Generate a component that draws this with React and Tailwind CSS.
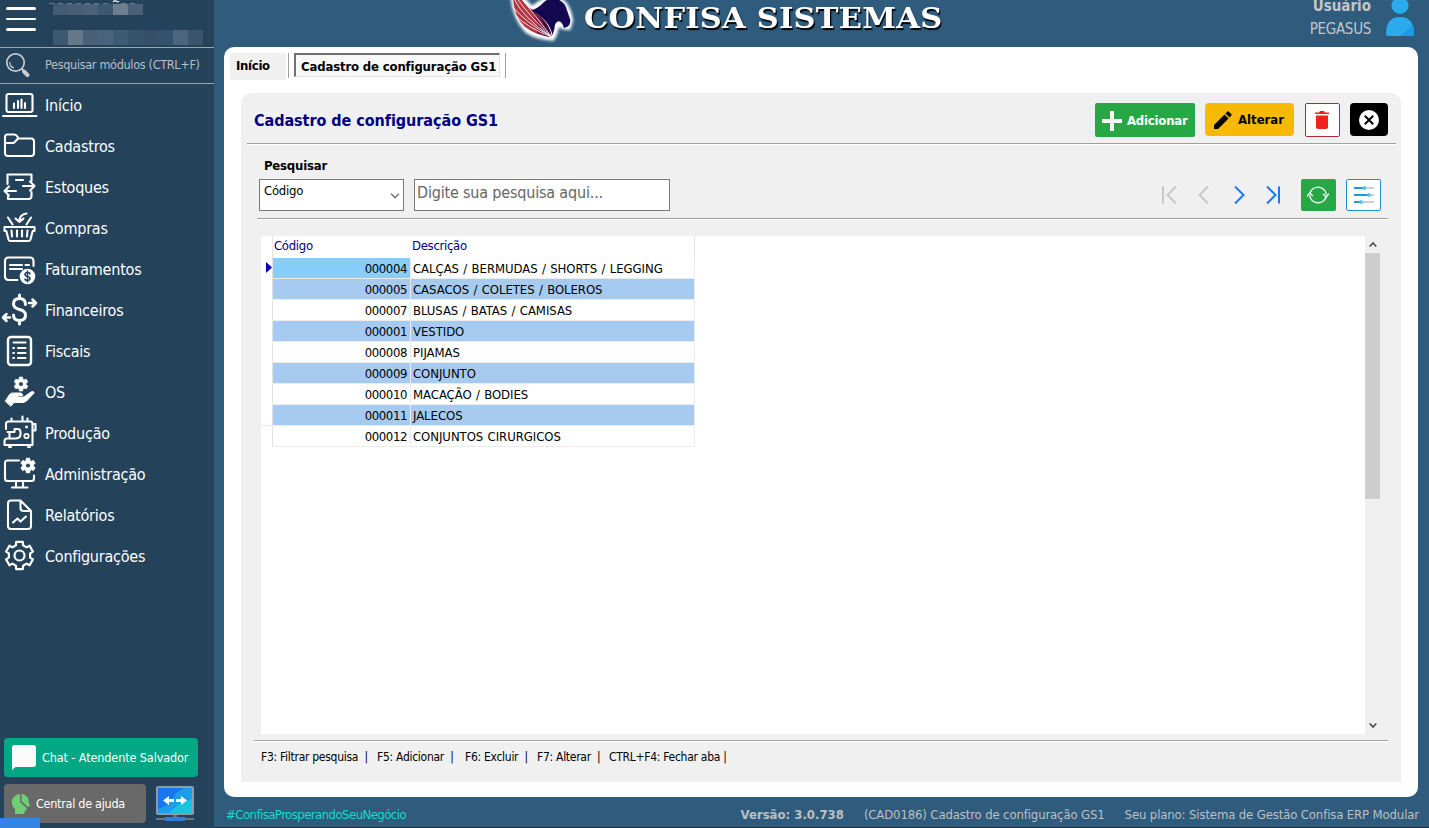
import React from "react";

function gearPath(cx, cy, outer, inner, top = 13, base = 21) {
  const pts = [];
  for (let i = 0; i < 6; i++) {
    const a = -90 + i * 60;
    [[-base, inner], [-top, outer], [top, outer], [base, inner]].forEach(([d, r]) => {
      const t = ((a + d) * Math.PI) / 180;
      pts.push(`${(cx + r * Math.cos(t)).toFixed(2)} ${(cy + r * Math.sin(t)).toFixed(2)}`);
    });
  }
  return `M${pts.join("L")}Z`;
}

const menu = [
  {
    label: "Início",
    icon: (
      <>
        <rect x="6.5" y="10" width="26" height="18" rx="2" />
        <path d="M3 32H36.5M14 19.500V24M18 17V24M21.500 15.500V24M25 19V24" />
      </>
    ),
  },
  {
    label: "Cadastros",
    icon: (
      <path d="M5 28V12Q5 9.500 7.500 9.500H14Q16 9.500 17 11L18.500 13.500H31Q34 13.500 34 16.500V28Q34 31 31 31H8Q5 31 5 28ZM5 18H12.500Q14 18 15 16.800L18 13.500" />
    ),
  },
  {
    label: "Estoques",
    icon: (
      <path d="M7.500 18V8.500H31.500V15M16 14H23M23 20H34.500M30 15.500L34.500 20L30 24.500M31.500 26V30Q31.500 33 28.500 33H8V29.500M16 25H4.500M9 20.500L4.500 25L9 29.500" />
    ),
  },
  {
    label: "Compras",
    icon: (
      <>
        <path d="M4.500 20H34.500V24H32.700L30.500 32.500Q30 34 28.500 34H10.500Q9 34 8.500 32.500L6.300 24H4.500ZM11.500 23.500L12 29.500M17 23.500V29.500M22 23.500V29.500M27.500 23.500L27 29.500M8 10.500L12.500 17.500M31 10.500L26.500 17.500" />
        <path d="M26.500 6.500Q19.500 7.500 19.500 14M15.500 11.500L19.500 15L23.500 11.500" />
      </>
    ),
  },
  {
    label: "Faturamentos",
    icon: (
      <>
        <path d="M17.500 32H8.500Q5 32 5 28.500V13Q5 9.500 8.500 9.500H30Q33.500 9.500 33.500 13V18M10 17H22M25.500 17H29M10 21H22" />
        <circle cx="27.500" cy="28.500" r="7.800" fill="white" stroke="none" />
        <path stroke="#24425a" strokeWidth="1.5" d="M30 26Q30 24.500 27.500 24.500T25 26.500Q25 28 27.500 28.500T30 30.500Q30 32.500 27.500 32.500T25 31M27.500 23V34" />
      </>
    ),
  },
  {
    label: "Financeiros",
    icon: (
      <>
        <path strokeWidth="3" d="M25.500 15.500Q25.500 9.500 19.500 9.500T13.500 15Q13.500 19 19.500 20.500T25.500 26Q25.500 31.500 19.500 31.500T13.500 26M19.500 6V9M19.500 32V35" />
        <path strokeWidth="2.500" d="M29 14H35.500M32.500 10.500L36 14L32.500 17.500M10 28.500H3.500M6.500 25L3 28.500L6.500 32" />
      </>
    ),
  },
  {
    label: "Fiscais",
    icon: (
      <>
        <rect x="8" y="7" width="23" height="28" rx="3" strokeWidth="2.400" />
        <path d="M13.500 12.500H25.500M18 18H25.500M18 23H25.500M18 28H25.500M13.200 18H14M13.200 23H14M13.200 28H14" />
      </>
    ),
  },
  {
    label: "OS",
    icon: (
      <>
        <path fill="white" fillRule="evenodd" strokeWidth="1" d={gearPath(21, 13, 7, 5) + "M21 10.500a2.500 2.500 0 1 0 .01 0Z"} />
        <path fill="white" strokeWidth="1" d="M5.500 30L9.500 23.500Q11.500 21.500 14 22H20.500Q23 22.500 22.500 24.500H17.500V26H24L31 21Q33.500 19.800 34.300 21.800L26.500 30Q24.500 31.500 22 31.500H14L11 35Z" />
      </>
    ),
  },
  {
    label: "Produção",
    icon: (
      <>
        <path d="M7 33H4.500V29.500Q4.500 26.500 7 26.500H16Q20.500 26 20.500 22.500V20Q20.500 17 17.500 17H14.500V20H7.500M6 17V12Q6 9.500 8.500 9.500H30Q32.500 9.500 32.500 12V33H7M11.500 9V6.500M22.500 9V4.500M27.500 9V6.500M9.500 20.500V26M32.500 12H35.500V18.500H32.500M9 35H11M28 35H30" />
        <circle cx="26.500" cy="15" r="1" fill="white" strokeWidth="1" />
        <circle cx="26.500" cy="24" r="2.200" strokeWidth="1.800" />
      </>
    ),
  },
  {
    label: "Administração",
    icon: (
      <>
        <path d="M19 7.500H7.500Q5 7.500 5 10V25.500Q5 28 7.500 28H31.500Q34 28 34 25.500V22.500M16 28V34M23 28V34M12 34.500H27.500" />
        <path fill="white" fillRule="evenodd" strokeWidth="1" d={gearPath(28, 12.500, 7.400, 5.300) + "M28 10a2.500 2.500 0 1 0 .01 0Z"} />
      </>
    ),
  },
  {
    label: "Relatórios",
    icon: (
      <path d="M20.500 6.500H11Q8 6.500 8 9.500V32Q8 35 11 35H28Q31 35 31 32V17L20.500 6.500ZM20.500 7V14Q20.500 17 23.500 17H31M13 28.500L17.500 24.500L20.500 27.500L26 22.500" />
    ),
  },
  {
    label: "Configurações",
    icon: (
      <>
        <path strokeWidth="2.200" d={gearPath(19.500, 20.500, 14, 10.800, 14, 19)} />
        <circle cx="19.500" cy="20.500" r="5" strokeWidth="2.200" />
      </>
    ),
  },
];

const rows = [
  ["000004", "CALÇAS / BERMUDAS / SHORTS / LEGGING"],
  ["000005", "CASACOS / COLETES / BOLEROS"],
  ["000007", "BLUSAS / BATAS / CAMISAS"],
  ["000001", "VESTIDO"],
  ["000008", "PIJAMAS"],
  ["000009", "CONJUNTO"],
  ["000010", "MACAÇÃO / BODIES"],
  ["000011", "JALECOS"],
  ["000012", "CONJUNTOS CIRURGICOS"],
];

const mosaicTop = ["bg-[#435b73]", "bg-[#465e76]", "bg-[#4b6278]", "bg-[#3e5870]", "bg-[#6b7f8f]", "bg-[#4a6177]"];
const mosaicBottom = [
  "bg-[#3f5871]", "bg-[#647789]", "bg-[#4a6076]", "bg-[#48637c]", "bg-[#3f5a73]",
  "bg-[#38546a]", "bg-[#364f69]", "bg-[#36516b]", "bg-[#4a657c]", "bg-[#3b546b]",
];

function Sidebar() {
  return (
    <aside className="flex w-[214px] shrink-0 flex-col bg-[#24425a] text-white">
      <div className="flex h-12 shrink-0 border-b border-[#9aa5ae]">
        <div className="flex w-[53px] flex-col gap-2 pt-[7px] pl-1.5">
          <span className="h-[2.5px] w-[30px] rounded bg-white" />
          <span className="h-[2.5px] w-[30px] rounded bg-white" />
          <span className="h-[2.5px] w-[30px] rounded bg-white" />
        </div>
        <div className="flex flex-col justify-between pb-0.5">
          <div className="flex flex-col">
            <svg className="-ml-1 h-1 w-[92px]" viewBox="0 0 92 4" fill="none" stroke="#9aa9b5" strokeWidth="0.8">
              <path strokeDasharray="5 4" d="M0 3.800H60M72 3.800H88" />
              <path stroke="#e2e8ec" strokeWidth="1.300" d="M64 2Q66 0 67.500 1.300T70 1" />
            </svg>
            <div className="flex h-[11px]">
              {mosaicTop.map((c) => <span key={c} className={`w-[15px] ${c}`} />)}
            </div>
          </div>
          <div className="flex h-[15px]">
            {mosaicBottom.map((c) => <span key={c} className={`w-[15px] ${c}`} />)}
          </div>
        </div>
      </div>
      <div className="flex h-9 shrink-0 items-center border-b border-[#9aa5ae]">
        <svg className="h-[35px] w-[45px] shrink-0" viewBox="0 0 45 35" fill="none" stroke="#c9cdd0">
          <circle cx="15.500" cy="14.500" r="8.700" strokeWidth="1.700" />
          <path strokeWidth="1.200" d="M9.800 14A5.800 5.800 0 0 0 14 20" />
          <path strokeWidth="4" strokeLinecap="round" d="M24 23.500L27.500 27" />
          <path strokeWidth="2" d="M21.500 20.500L24 23" />
        </svg>
        <span className="text-[12.5px] tracking-[-0.3px] whitespace-nowrap text-[#b9bfc3]">Pesquisar módulos (CTRL+F)</span>
      </div>
      <nav className="flex flex-col">
        {menu.map((m) => (
          <div key={m.label} className="flex h-[41px] items-center">
            <svg className="h-[41px] w-[38px] shrink-0" viewBox="0 0 38 41" fill="none" stroke="white" strokeWidth="2.100" strokeLinejoin="round" strokeLinecap="round">
              {m.icon}
            </svg>
            <span className="pt-0.5 pl-[7px] text-base tracking-[-0.22px]">{m.label}</span>
          </div>
        ))}
      </nav>
      <div className="mt-auto flex flex-col gap-[7px] pb-[5px] pl-1">
        <div className="flex h-[39px] w-[194px] items-center rounded bg-[#02a884] pl-2">
          <svg className="h-[25px] w-6" viewBox="0 0 24 25" fill="#fafafa">
            <path d="M3 0H21Q24 0 24 3V19Q24 22 21 22H3.500L0 25V3Q0 0 3 0Z" />
          </svg>
          <span className="pt-0.5 pl-1.5 text-[12.5px] tracking-[-0.1px]">Chat - Atendente Salvador</span>
        </div>
        <div className="flex items-center gap-2.5">
          <div className="flex h-[39px] w-[142px] items-center rounded bg-[#696969] pl-[7px]">
            <svg className="h-[22px] w-5" viewBox="0 0 20 22" fill="#6fce75">
              <path d="M9 1V9L15.500 15Q16 18 13.500 18V21H4V16Q0 13 1 7.500Q3 1.500 9 1Z" />
              <path d="M10.500 1Q16 1.500 17.500 6.500V9L19 12.500L17 14L10.500 8Z" />
            </svg>
            <span className="pt-0.5 pl-[5px] text-[12.5px] tracking-[-0.28px]">Central de ajuda</span>
          </div>
          <svg className="h-9 w-[38px]" viewBox="0 0 38 36">
            <rect width="38" height="29" rx="2" fill="#8e9aa6" />
            <rect x="2" y="2" width="34" height="25" fill="#1976f3" />
            <path d="M2 23Q14 20 20 7L28 2H36V27H2Z" fill="#1c9fe9" />
            <path d="M14 27Q20 18 36 13V27Z" fill="#19c4de" />
            <path d="M7 14.500L13 10V13H18V16H13V19ZM31 14.500L25 10V13H20V16H25V19Z" fill="white" />
            <path d="M17 29H21V33H17Z" fill="#6f7681" />
            <path d="M0 33H38" stroke="#6f7681" strokeWidth="2" />
            <path d="M9 33H29" stroke="#2d7fe0" strokeWidth="4" />
          </svg>
        </div>
      </div>
    </aside>
  );
}

function Header() {
  return (
    <header className="flex h-[47px] shrink-0 items-start">
      <svg className="ml-[294px] h-11 w-[70px] shrink-0" viewBox="0 0 210 132">
        <defs>
          <filter id="glow" x="-20%" y="-20%" width="140%" height="140%">
            <feGaussianBlur stdDeviation="4" />
          </filter>
        </defs>
        <path d="M14 -8Q20 54 56 92Q85 112 133 116Q144 102 145 84Q160 66 166 82L182 84L189 62Q182 14 158 2L136 -10Q100 2 72 26L38 -10Z" fill="white" stroke="white" strokeWidth="13" filter="url(#glow)" />
        <path d="M15 -6Q18 50 50 80Q84 106 131 111Q124 64 76 32Q52 16 40 -6Z" fill="#b5343f" />
        <path d="M86 100Q110 108 131 111Q126 72 76 32L66 26Q96 70 86 100Z" fill="#7d1c3c" />
        <path d="M108 107L131 111Q127 76 92 44Q114 78 108 107Z" fill="#48093e" />
        <path d="M14 20Q50 66 131 111M18 -4Q44 52 131 111M28 -4Q60 44 131 111M40 -4Q72 34 131 111M24 48Q60 84 131 111" fill="none" stroke="white" strokeWidth="2.500" />
        <path d="M70 31Q92 24 108 6L130 -10Q168 2 174 22L187 60Q187 76 178 80L168 84Q162 64 152 64Q140 66 139 88L133 106Q126 62 70 31Z" fill="#13084f" />
      </svg>
      <h1 className="ml-[6px] w-[363px] origin-left scale-x-[1.13] font-['DejaVu_Serif',serif] text-[27px] leading-[37px] font-bold tracking-[0.2px] whitespace-nowrap text-white [font-stretch:normal] [text-shadow:1px_2px_1px_#000]">
        CONFISA SISTEMAS
      </h1>
      <div className="ml-auto flex flex-col items-end pr-3.5 text-[15px] text-[#c3c6c8]">
        <span className="leading-[13px] font-bold">Usuário</span>
        <span className="mt-[5px] leading-[22px] tracking-[-0.3px]">PEGASUS</span>
      </div>
      <svg className="mr-3.5 h-[37px] w-[30px] shrink-0" viewBox="0 0 30 37" fill="#29abec">
        <circle cx="15" cy="5.500" r="8.500" />
        <path d="M1 34Q1 17 15 17T29 34Q29 36 27 36H3Q1 36 1 34Z" />
        <path d="M15 36L28 25Q29 29 29 34Q29 36 27 36Z" fill="#1f98e8" />
      </svg>
    </header>
  );
}

function Tabs() {
  return (
    <div className="flex h-[46px] shrink-0 items-start pt-1.5 pl-1.5 text-[13px] font-bold">
      <div className="flex h-[27px] w-14 items-center bg-[#f0f0f0] pb-0.5 pl-1.5 tracking-[-0.3px]">Início</div>
      <div className="ml-0.5 h-[25px] w-px bg-[#a0a0a0]" />
      <div className="ml-[5px] flex h-6 w-[206px] items-center border-t-2 border-l-2 border-r border-b border-t-[#707070] border-r-[#e3e3e3] border-b-[#e3e3e3] border-l-[#707070] bg-[#f8f8f8] pt-0.5 pl-[5px] tracking-[-0.15px] whitespace-nowrap">
        Cadastro de configuração GS1
      </div>
      <div className="ml-[5px] h-[25px] w-px bg-[#a0a0a0]" />
    </div>
  );
}

function Toolbar() {
  return (
    <div className="ml-1.5 flex h-[51px] w-[1149px] shrink-0 items-start border-b border-[#a0a0a0] pt-2.5 pl-[7px] shadow-[0_1px_0_#fff]">
      <h2 className="flex h-[34px] items-center pt-0.5 text-base font-bold tracking-[-0.05px] text-[#000080]">Cadastro de configuração GS1</h2>
      <div className="ml-auto flex items-start gap-2.5 pr-2 text-[13px] font-bold">
        <button className="flex h-[34px] w-[100px] items-center rounded-[2px] bg-[#28a745] pt-px pl-[7px] tracking-[-0.2px] text-white">
          <svg className="mr-[5px] h-5 w-5" viewBox="0 0 20 20" fill="white"><path d="M8 0H12V8H20V12H12V20H8V12H0V8H8Z" /></svg>
          Adicionar
        </button>
        <button className="mr-px flex h-[33px] w-[89px] items-center rounded bg-[#f8b904] pt-px pl-[9px] text-black">
          <svg className="mr-1.5 h-[18px] w-[18px]" viewBox="0 0 18 18"><path d="M0 18V14L10.500 3.500L14.500 7.500L4 18ZM11.500 2.500L14 0L18 3.800L15.500 6.500Z" /></svg>
          Alterar
        </button>
        <button className="flex h-[34px] w-[35px] items-center justify-center rounded-[2px] border border-[#b02a37] bg-white pr-px">
          <svg className="h-[18px] w-3.5" viewBox="0 0 14 18" fill="#f0221d"><path d="M0 1.500H4L5 0H9L10 1.500H14V3H0ZM1 4.500H13V16Q13 18 11 18H3Q1 18 1 16Z" /></svg>
        </button>
        <button className="flex h-[33px] w-[38px] items-center justify-center rounded bg-black">
          <svg className="h-5 w-5" viewBox="0 0 20 20"><circle cx="10" cy="10" r="10" fill="white" /><path d="M5.800 5.800L14.200 14.200M14.200 5.800L5.800 14.200" stroke="black" strokeWidth="2" /></svg>
        </button>
      </div>
    </div>
  );
}

function Filters() {
  return (
    <div className="ml-4 flex h-[75px] w-[1131px] shrink-0 flex-col border-b border-[#a0a0a0] pl-0.5 shadow-[0_1px_0_#fff]">
      <label className="flex h-[35px] items-center pt-[9px] pl-[5px] text-[13px] font-bold tracking-[-0.2px]">Pesquisar</label>
      <div className="flex h-8 items-start">
        <div className="flex h-8 w-[145px] justify-between border border-[#7a7a7a] bg-white pr-[3px] pl-1 text-[13px]">
          <span className="pt-0.5 leading-[18px] tracking-[-0.25px]">Código</span>
          <svg className="mt-[13px] h-1.5 w-2.5" viewBox="0 0 10 6" fill="none" stroke="#555" strokeWidth="1.100"><path d="M1 .7L5 4.700L9 .7" /></svg>
        </div>
        <div className="ml-2.5 h-8 w-64 border border-[#7a7a7a] bg-white pt-px pl-0.5 text-base leading-[23px] tracking-[-0.18px] text-[#666]">
          Digite sua pesquisa aqui...
        </div>
        <div className="ml-auto flex items-center pr-[7px]">
          <svg className="h-5 w-[120px]" viewBox="0 0 120 20" fill="none" strokeWidth="2">
            <path stroke="#c8c8c8" d="M3 1.500V18.500M16 1.500L7.500 10L16 18.500M48 1.500L39.500 10L48 18.500" />
            <path stroke="#1a78f0" d="M75 1.500L83.500 10L75 18.500M107 1.500L115.500 10L107 18.500M119 1.500V18.500" />
          </svg>
          <button className="ml-[21px] flex h-8 w-[35px] items-center justify-center rounded-[2px] bg-[#28a745] pr-px">
            <svg className="h-5 w-[22px]" viewBox="0 0 22 20" fill="none" stroke="#e9f5ec" strokeWidth="1.700">
              <path d="M3 8A8.400 8.400 0 0 1 19.300 9.500M19 12A8.400 8.400 0 0 1 2.700 10.500" />
              <path d="M16 9L19.300 12L22 8.500M0 11.500L2.700 8L6 11" strokeWidth="1.500" />
            </svg>
          </button>
          <button className="ml-2.5 flex h-8 w-[35px] items-center justify-center rounded-[2px] border border-[#2490cf] bg-white">
            <svg className="h-[18px] w-5" viewBox="0 0 20 18" strokeWidth="2">
              <path stroke="#cfcfcf" d="M11 2H20M15 9H20M8 16H20" />
              <path stroke="#2196dc" d="M0 2H11M0 9H15M0 16H8" />
              <g fill="#59c4f2"><circle cx="10.500" cy="2" r="1.900" /><circle cx="15" cy="9" r="1.900" /><circle cx="7" cy="16" r="1.900" /></g>
            </svg>
          </button>
        </div>
      </div>
    </div>
  );
}

function Grid() {
  return (
    <div className="mt-[17px] ml-5 flex h-[498px] w-[1119px] shrink-0 text-[13px]">
      <div className="flex flex-1 flex-col bg-white">
        <div className="flex h-[22px] leading-[19px] tracking-[-0.3px] text-[#000080]">
          <div className="h-full w-3 border-r border-[#e4e4e4]" />
          <div className="w-[138px] pl-px">Código</div>
          <div className="h-full w-[284px] border-r border-[#e4e4e4] pl-px">Descrição</div>
        </div>
        {rows.map(([code, name], i) => {
          const stripe = i % 2 ? "bg-[#a6caf0]" : "bg-white";
          return (
            <div key={code} className="flex h-[21px] leading-[21px]">
              <div className={`flex w-3 items-center justify-end border-r border-[#e4e4e4] ${i === 7 ? "border-b border-b-[#d8f0e8]" : ""}`}>
                {i === 0 && <svg className="mb-0.5 h-[11px] w-1.5" viewBox="0 0 6 11" fill="#0000b8"><path d="M0 0L6 5.500L0 11Z" /></svg>}
              </div>
              <div className={`w-[138px] border-r border-b border-[#ececec] pr-[3px] text-right tracking-[-0.4px] ${i === 0 ? "bg-[#87cefa]" : stripe}`}>
                <span className="block pt-px leading-5">{code}</span>
              </div>
              <div className={`w-[284px] border-r border-b border-[#ececec] pl-0.5 tracking-[-0.05px] [word-spacing:0.7px] ${stripe}`}>
                <span className="block pt-px leading-5">{name}</span>
              </div>
            </div>
          );
        })}
      </div>
      <div className="flex w-[15px] flex-col items-center justify-between bg-[#f0f0f0]">
        <svg className="mt-[5px] h-[7px] w-2 shrink-0" viewBox="0 0 8 7" fill="none" stroke="#505050" strokeWidth="1.800"><path d="M.7 5.500L4 2L7.300 5.500" /></svg>
        <div className="mt-[5px] mb-auto h-[246px] w-full bg-[#cdcdcd]" />
        <svg className="mb-[5px] h-[7px] w-2 shrink-0" viewBox="0 0 8 7" fill="none" stroke="#505050" strokeWidth="1.800"><path d="M.7 1.500L4 5L7.300 1.500" /></svg>
      </div>
    </div>
  );
}

export default function App() {
  return (
    <div className="relative flex h-[828px] w-[1429px] overflow-hidden bg-[#2f5b7d] font-['DejaVu_Sans_Condensed','DejaVu_Sans',sans-serif] text-black [font-stretch:condensed]">
      <Sidebar />
      <div className="flex w-[1215px] flex-col">
        <Header />
        <main className="ml-2.5 flex h-[750px] w-[1194px] shrink-0 flex-col rounded-[10px] bg-white">
          <Tabs />
          <section className="ml-[17px] flex h-[689px] w-[1160px] flex-col rounded-t-[10px] bg-[#f0f0f0]">
            <Toolbar />
            <Filters />
            <Grid />
            <div className="mt-1.5 ml-[13px] flex w-[1134px] border-t border-[#a0a0a0] pt-2 pl-[7px] text-xs leading-4 tracking-[-0.28px] whitespace-pre shadow-[inset_0_1px_0_#fff]">
              <span className="w-[116px]">F3: Filtrar pesquisa  |</span>
              <span className="w-[88px]">F5: Adicionar  |</span>
              <span className="w-[72px]">F6: Excluir  |</span>
              <span className="w-[72px]">F7: Alterar  |</span>
              <span>CTRL+F4: Fechar aba |</span>
            </div>
          </section>
        </main>
        <footer className="flex h-[31px] items-center border-b border-[#263238] pt-1.5 pr-2.5 pl-3 text-[13px] tracking-[-0.13px] whitespace-nowrap text-[#bcc0c2]">
          <span className="tracking-[-0.54px] text-[#12dccb]">#ConfisaProsperandoSeuNegócio</span>
          <span className="ml-auto font-bold tracking-normal">Versão: 3.0.738</span>
          <span className="ml-5">(CAD0186) Cadastro de configuração GS1</span>
          <span className="ml-5">Seu plano: Sistema de Gestão Confisa ERP Modular</span>
        </footer>
      </div>
      <div className="absolute bottom-0 left-0 h-2.5 w-10 bg-[#3584e4]" />
    </div>
  );
}
